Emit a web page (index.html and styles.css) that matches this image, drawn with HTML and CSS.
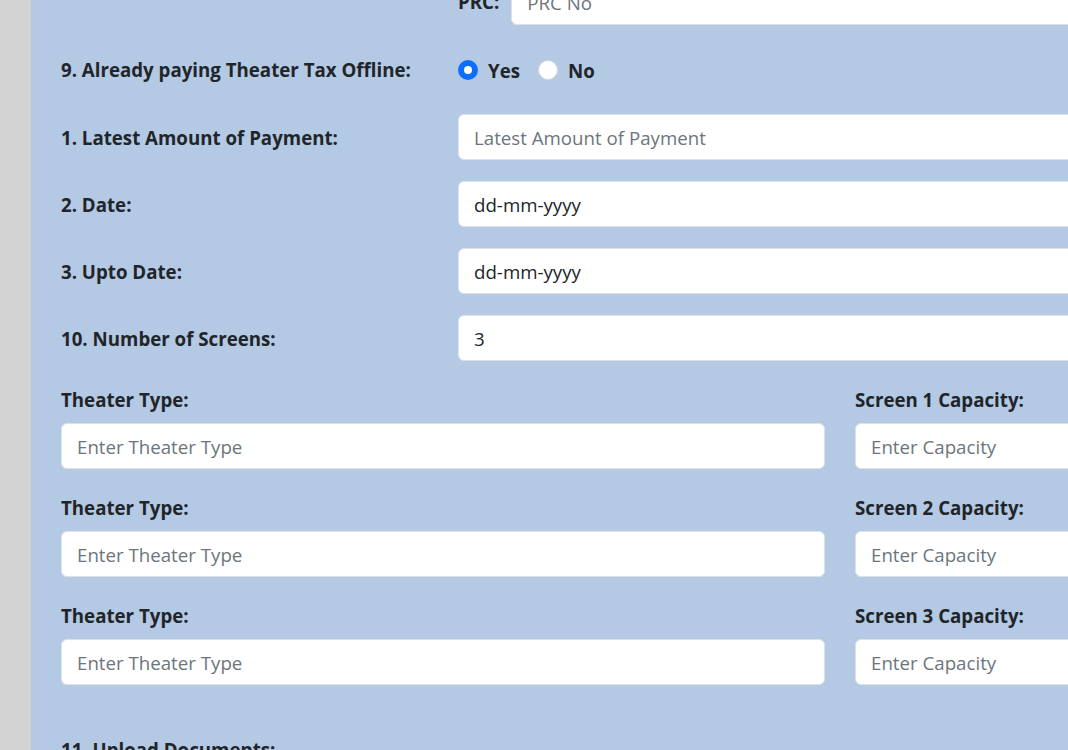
FILE: index.html
```html
<!DOCTYPE html>
<html>
<head>
<meta charset="utf-8">
<link rel="stylesheet" href="styles.css">
</head>
<body>
<div class="page">
  <div class="side"></div>
  <main class="panel">
    <div class="row prc-row">
      <div class="col-4"></div>
      <div class="col-8 inline">
        <label class="lbl prc-lbl">PRC:</label>
        <input class="ctl" placeholder="PRC No">
      </div>
    </div>

    <div class="row radio-row">
      <div class="col-4"><label class="lbl">9. Already paying Theater Tax Offline:</label></div>
      <div class="col-8 radios">
        <label class="radio"><span class="dot on"></span>Yes</label>
        <label class="radio"><span class="dot"></span>No</label>
      </div>
    </div>

    <div class="row field">
      <div class="col-4"><label class="lbl">1. Latest Amount of Payment:</label></div>
      <div class="col-8"><input class="ctl" placeholder="Latest Amount of Payment"></div>
    </div>
    <div class="row field">
      <div class="col-4"><label class="lbl">2. Date:</label></div>
      <div class="col-8"><input class="ctl" value="dd-mm-yyyy"></div>
    </div>
    <div class="row field">
      <div class="col-4"><label class="lbl">3. Upto Date:</label></div>
      <div class="col-8"><input class="ctl" value="dd-mm-yyyy"></div>
    </div>
    <div class="row field">
      <div class="col-4"><label class="lbl">10. Number of Screens:</label></div>
      <div class="col-8"><input class="ctl" value="3"></div>
    </div>

    <div class="row stack">
      <div class="col-8"><label class="lbl">Theater Type:</label><input class="ctl" placeholder="Enter Theater Type"></div>
      <div class="col-4"><label class="lbl">Screen 1 Capacity:</label><input class="ctl" placeholder="Enter Capacity"></div>
    </div>
    <div class="row stack">
      <div class="col-8"><label class="lbl">Theater Type:</label><input class="ctl" placeholder="Enter Theater Type"></div>
      <div class="col-4"><label class="lbl">Screen 2 Capacity:</label><input class="ctl" placeholder="Enter Capacity"></div>
    </div>
    <div class="row stack">
      <div class="col-8"><label class="lbl">Theater Type:</label><input class="ctl" placeholder="Enter Theater Type"></div>
      <div class="col-4"><label class="lbl">Screen 3 Capacity:</label><input class="ctl" placeholder="Enter Capacity"></div>
    </div>

    <div class="row upload">
      <div class="col-12"><label class="lbl">11. Upload Documents:</label></div>
    </div>
  </main>
</div>
</body>
</html>
```
FILE: styles.css
```css
html, body {
  margin: 0;
  padding: 0;
  overflow: hidden;
  height: 750px;
  background: #d3d3d3;
}
body {
  font-family: "Open Sans", "Noto Sans", sans-serif;
  color: #212529;
}
.page {
  display: flex;
  width: 1300px;
}
.side {
  width: 31px;
  flex: none;
  background: #d3d3d3;
}
.panel {
  flex: none;
  width: 1221px;
  background: #b3c9e4;
  padding: 0 15px;
  min-height: 800px;
}
.row {
  display: flex;
  width: 1191px;
}
.col-4 {
  width: 397px;
  padding: 0 15px;
  box-sizing: border-box;
  flex: none;
}
.col-8 {
  width: 794px;
  padding: 0 15px;
  box-sizing: border-box;
  flex: none;
}
.col-12 {
  width: 1191px;
  padding: 0 15px;
  box-sizing: border-box;
}
.lbl {
  font-weight: 700;
  font-size: 18.7px;
  line-height: 24px;
  display: block;
  white-space: nowrap;
}
.ctl {
  display: block;
  width: 100%;
  box-sizing: border-box;
  height: 46px;
  padding: 0 15px;
  border: 1px solid #dee2e6;
  border-radius: 6px;
  background: #fff;
  font-family: inherit;
  font-size: 18.7px;
  color: #212529;
  outline: none;
}
.ctl::placeholder {
  color: #6c757d;
}
.prc-row {
  margin-top: -21px;
}
.inline {
  display: flex;
  align-items: center;
  gap: 12px;
}
.prc-lbl {
  flex: none;
}
.radio-row {
  margin-top: 33px;
  align-items: center;
  height: 24px;
}
.radios {
  display: flex;
  align-items: center;
  gap: 18px;
}
.radio {
  display: flex;
  align-items: center;
  gap: 10px;
  font-weight: 700;
  font-size: 18.7px;
}
.dot {
  width: 20px;
  height: 20px;
  border-radius: 50%;
  background: #fff;
  box-sizing: border-box;
  border: 1px solid #cfd8e3;
}
.dot.on {
  border: 6px solid #0d6efd;
}
.field {
  align-items: center;
  margin-top: 21px;
}
.field .lbl {
  padding-top: 2px;
}
.radio-row + .field {
  margin-top: 32px;
}
.stack .lbl {
  margin-bottom: 11px;
}
.stack {
  margin-top: 27px;
}
.upload {
  margin-top: 53px;
}
```
